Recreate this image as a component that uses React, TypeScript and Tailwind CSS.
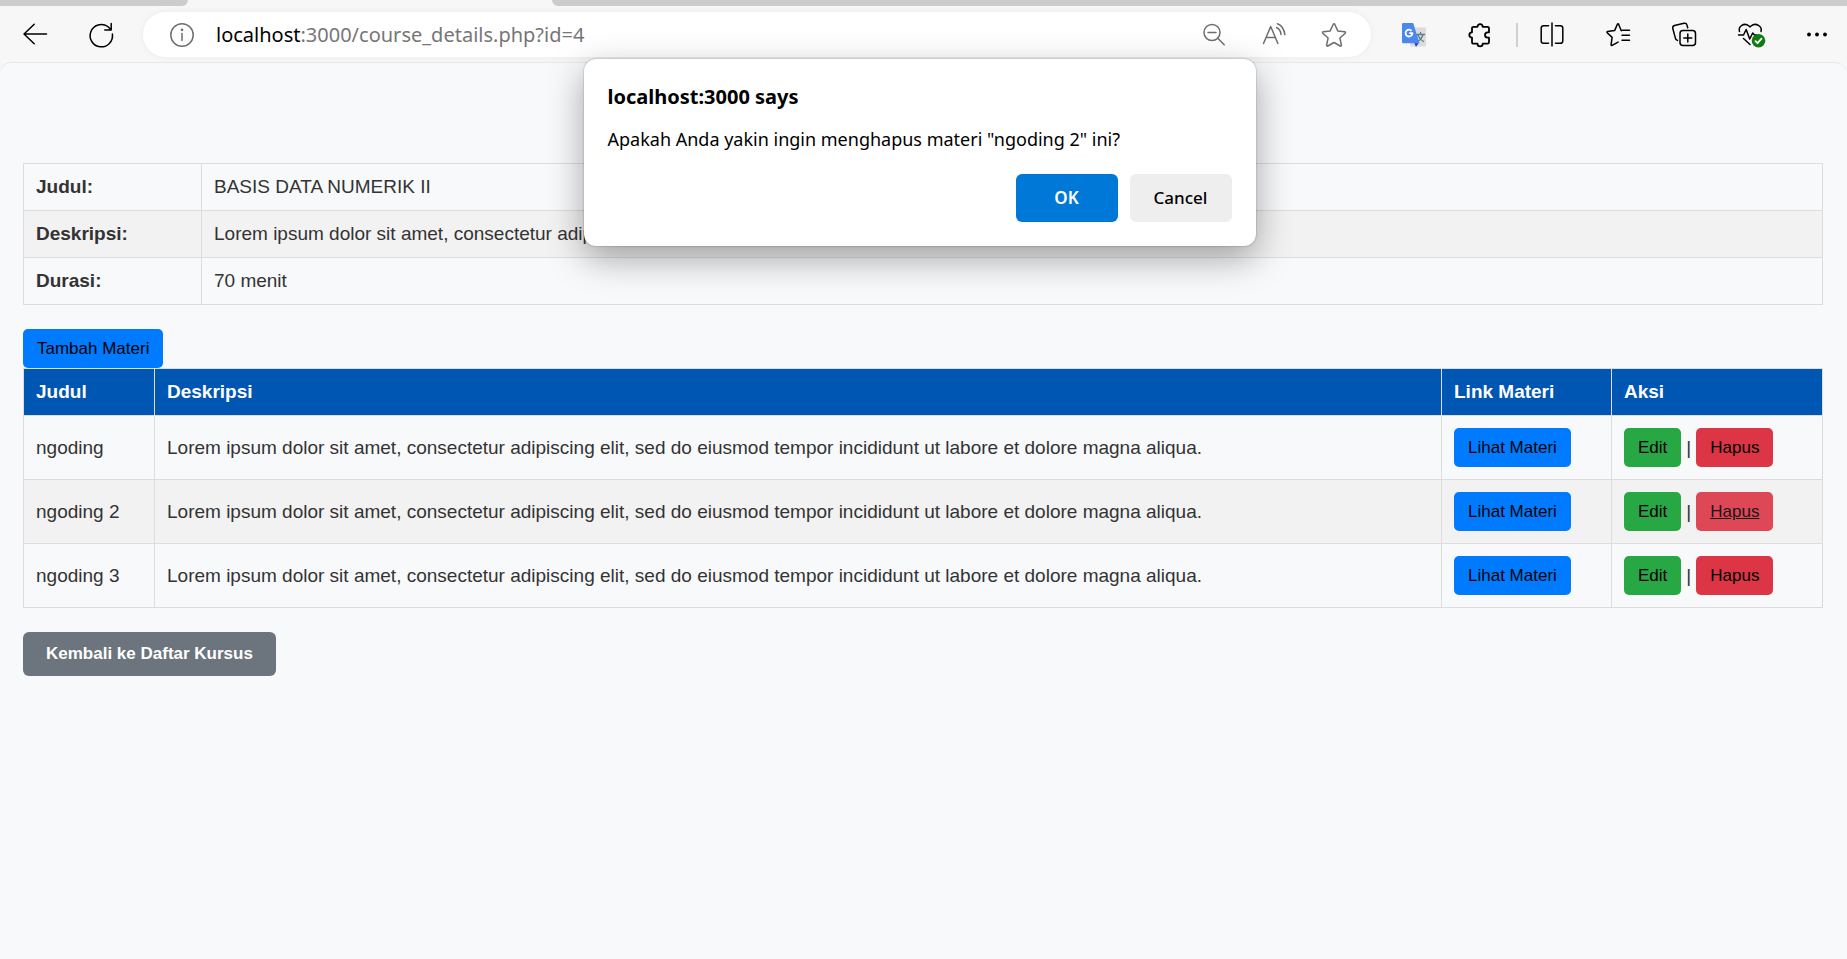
import type { ReactNode } from 'react';

const lorem =
  'Lorem ipsum dolor sit amet, consectetur adipiscing elit, sed do eiusmod tempor incididunt ut labore et dolore magna aliqua.';

const details = [
  { label: 'Judul:', value: 'BASIS DATA NUMERIK II' },
  { label: 'Deskripsi:', value: lorem },
  { label: 'Durasi:', value: '70 menit' },
];

const materials = [
  { title: 'ngoding', active: false },
  { title: 'ngoding 2', active: true },
  { title: 'ngoding 3', active: false },
];

function Icon({ children }: { children: ReactNode }) {
  return (
    <svg
      viewBox="0 0 24 24"
      fill="none"
      stroke="currentColor"
      strokeWidth="1.5"
      strokeLinecap="round"
      strokeLinejoin="round"
      aria-hidden="true"
      className="size-6 overflow-visible"
    >
      {children}
    </svg>
  );
}

function ToolButton({ label, children }: { label: string; children: ReactNode }) {
  return (
    <button type="button" aria-label={label} className="size-6 shrink-0">
      {children}
    </button>
  );
}

function TabStrip() {
  return (
    <div className="flex h-1.5 bg-[#f7f7f7]">
      <div className="w-[188px] rounded-br-md bg-[#cccccc]" />
      <div className="w-[364px]" />
      <div className="flex-1 rounded-bl-md bg-[#cccccc]" />
    </div>
  );
}

function Toolbar() {
  return (
    <div className="flex h-14 items-center bg-[#f7f7f7] pt-px pr-[19px] pl-[23px] text-black">
      <div className="flex gap-[42px]">
        <ToolButton label="Back">
          <Icon>
            <path d="M11.2 1.200 1 11l10.200 9.700M1 11h22.500" />
          </Icon>
        </ToolButton>
        <ToolButton label="Refresh">
          <Icon>
            <path d="M23.400 11a11.200 11.200 0 1 1-4.600-7.500l3 3M22.200.5v6.500h-6.400" />
          </Icon>
        </ToolButton>
      </div>

      <div className="ml-[30px] flex h-[45px] flex-1 items-center rounded-full bg-white pr-[25px] pl-[27px] text-[#6e6e6e] shadow-[0_0_6px_rgba(0,0,0,0.06)]">
        <ToolButton label="View site information">
          <Icon>
            <circle cx="12" cy="12" r="11.2" />
            <path d="M12 10.5v7" />
            <circle cx="12" cy="6.8" r="0.6" fill="currentColor" />
          </Icon>
        </ToolButton>
        <span className="ml-[22px] flex-1 font-['Noto_Sans',sans-serif] text-[20px] leading-7 text-[#767676]">
          <span className="text-black">localhost</span>:3000/course_details.php?id=4
        </span>
        <div className="flex gap-9">
          <ToolButton label="Zoom">
            <Icon>
              <circle cx="10" cy="9.500" r="8" />
              <path d="m15.800 15.300 6.400 6.400M6 9.500h8" />
            </Icon>
          </ToolButton>
          <ToolButton label="Read aloud">
            <Icon>
              <path d="M1.500 20.500 8.700 3.500l7.200 17M4 14.500h9.500M14.500 4.500c2.800 1.300 4.300 3.700 4.500 7M15.500.7c4.200 1.700 6.800 5.500 7.300 11" />
            </Icon>
          </ToolButton>
          <ToolButton label="Add to favorites">
            <Icon>
              <path d="M11.300 1.200a.8.8 0 0 1 1.400 0l3.100 6.700 7 .9a.8.8 0 0 1 .4 1.400l-5.300 4.800 1.500 7.200a.8.8 0 0 1-1.200.8L12 19.500 5.800 23a.8.8 0 0 1-1.200-.8L6.100 15 .8 10.200a.8.8 0 0 1 .4-1.400l7-.9z" />
            </Icon>
          </ToolButton>
        </div>
      </div>

      <div className="ml-[31px] flex items-center">
        <ToolButton label="Google Translate">
          <Icon>
            <rect x="8" y="4.500" width="16" height="19" rx="1" fill="#dcdcdc" stroke="none" />
            <path
              d="M14.500 11.500h8M18.500 9.500v2M21 11.500c-.8 3-2.800 5.500-5.500 7M16 12.500c1 2.500 3 4.700 5.500 6"
              stroke="#607d8b"
              strokeWidth="1.300"
            />
            <path d="M12 19.500h5L14 24z" fill="#3340c0" stroke="none" />
            <path
              d="M1.200 0h10l6.300 20.300H1.200A1.200 1.200 0 0 1 0 19V1.200A1.200 1.200 0 0 1 1.200 0z"
              fill="#4a88f0"
              stroke="none"
            />
            <path d="M9.600 7.900A3.400 3.400 0 1 0 10.400 10.200H7.300" stroke="#fff" strokeWidth="1.800" strokeLinecap="butt" />
          </Icon>
        </ToolButton>
        <div className="ml-[42px] flex">
          <ToolButton label="Extensions">
            <Icon>
              <path
                strokeWidth="1.800"
                d="M6 3.800h3.500a2.600 2.600 0 0 1 5.200 0h4.800a1.500 1.500 0 0 1 1.500 1.500v4h-1.300a2.700 2.700 0 0 0 0 5.400H21v4.500a1.500 1.500 0 0 1-1.500 1.500h-4.800a2.600 2.600 0 0 1-5.200 0H5.500A1.500 1.500 0 0 1 4 19.200v-4.500a2.700 2.700 0 0 1 0-5.400v-4a1.500 1.500 0 0 1 1.500-1.500z"
              />
            </Icon>
          </ToolButton>
        </div>
        <div className="ml-6 h-6 w-0.5 bg-[#d0d0d0]" />
        <div className="ml-[22px] flex gap-[42px]">
          <ToolButton label="Split screen">
            <Icon>
              <path d="M8.500 2.700H3.500A2.300 2.300 0 0 0 1.200 5v13a2.300 2.300 0 0 0 2.300 2.300h5M15.500 2.700h5A2.300 2.300 0 0 1 22.800 5v13a2.300 2.300 0 0 1-2.300 2.300h-5M12 0v23" />
            </Icon>
          </ToolButton>
          <ToolButton label="Favorites">
            <Icon>
              <path d="M15.300 7.700 12.600 1.200a.7.7 0 0 0-1.200 0L8.600 7.600l-7 1a.7.7 0 0 0-.4 1.200l4.900 4.600-1 7.300a.7.7 0 0 0 1 .7l6-3.300M16.500 7.200h7M16 12.200h7.500M16 17.200h7.500" />
            </Icon>
          </ToolButton>
          <ToolButton label="Collections">
            <Icon>
              <rect x="8" y="7.500" width="15.500" height="15" rx="3" />
              <path d="M15.800 11v8M11.800 15h8M5.500 17.500l-1.200-.8a3 3 0 0 1-1-1.800L.8 5.500A2.500 2.500 0 0 1 2.500 2.500L12 .3a2.500 2.500 0 0 1 3 1.800l.7 2.600" />
            </Icon>
          </ToolButton>
          <ToolButton label="Browser essentials">
            <Icon>
              <path d="M1.500 8.500C0 3.500 6-1 11 3l1 1 1-1c5-4 11.500.5 10 5.500M.5 12h5l2.700-5.500 3.500 9.500 3-6 1.800 2h2M5.500 15.500l6.500 6" />
              <circle cx="20.500" cy="17.800" r="6.800" fill="#107c10" stroke="none" />
              <path d="m17.500 18.200 2 2 4-4.500" stroke="#fff" strokeWidth="1.800" />
            </Icon>
          </ToolButton>
          <ToolButton label="Settings and more">
            <Icon>
              <circle cx="5" cy="11.500" r="1.900" fill="currentColor" stroke="none" />
              <circle cx="13" cy="11.500" r="1.900" fill="currentColor" stroke="none" />
              <circle cx="21" cy="11.500" r="1.900" fill="currentColor" stroke="none" />
            </Icon>
          </ToolButton>
        </div>
      </div>
    </div>
  );
}

const pill = 'inline-block rounded-[5px] px-3.5 py-2.5 text-[17px] leading-[19px] text-black';
const cell = 'border border-[#dddddd] px-3 py-3 text-left';

function ConfirmDialog() {
  return (
    <div
      role="dialog"
      aria-labelledby="dialog-title"
      className="absolute top-[59px] left-1/2 flex w-[672px] max-w-full -translate-x-[340px] flex-col rounded-xl bg-white p-6 font-['Noto_Sans',sans-serif] text-black shadow-[0_0_2px_rgba(0,0,0,0.35),0_12px_36px_rgba(0,0,0,0.35)]"
    >
      <h1 id="dialog-title" className="text-[20px] leading-7 font-bold">
        localhost:3000 says
      </h1>
      <p className="mt-3.5 text-[18px] leading-7">Apakah Anda yakin ingin menghapus materi "ngoding 2" ini?</p>
      <div className="mt-[21px] flex justify-end gap-3 text-[17px] font-medium">
        <button type="button" className="h-12 w-[102px] rounded-md bg-[#0078d7] font-semibold text-white">
          OK
        </button>
        <button type="button" className="h-12 w-[102px] rounded-md bg-[#eeeeee]">
          Cancel
        </button>
      </div>
    </div>
  );
}

export default function App() {
  return (
    <div className="relative flex min-h-screen flex-col bg-[#f7f7f7]">
      <TabStrip />
      <Toolbar />
      <main className="flex-1 rounded-t-xl border-t border-[#e6e6e6] bg-[#f8f9fb] pt-[100px] pr-6 pl-[23px] font-['Liberation_Sans',Arial,sans-serif] text-[19px] leading-[22px] text-[#333333]">
        <table className="w-full border-collapse">
          <tbody>
            {details.map((row) => (
              <tr key={row.label} className="even:bg-[#f2f2f2]">
                <th scope="row" className={`${cell} w-[178px] font-bold`}>
                  {row.label}
                </th>
                <td className={cell}>{row.value}</td>
              </tr>
            ))}
          </tbody>
        </table>

        <div className="mt-6 flex">
          <a href="#tambah" className={`${pill} bg-[#007bff]`}>
            Tambah Materi
          </a>
        </div>

        <table className="w-full border-collapse">
          <thead>
            <tr className="bg-[#0056b3] text-white">
              <th scope="col" className={`${cell} w-[131px]`}>Judul</th>
              <th scope="col" className={cell}>Deskripsi</th>
              <th scope="col" className={`${cell} w-[170px]`}>Link Materi</th>
              <th scope="col" className={`${cell} w-[211px]`}>Aksi</th>
            </tr>
          </thead>
          <tbody>
            {materials.map((item) => (
              <tr key={item.title} className="even:bg-[#f2f2f2]">
                <td className={cell}>{item.title}</td>
                <td className={cell}>{lorem}</td>
                <td className={cell}>
                  <div className="flex">
                    <a href="#lihat" className={`${pill} bg-[#007bff]`}>
                      Lihat Materi
                    </a>
                  </div>
                </td>
                <td className={cell}>
                  <div className="flex items-center gap-[5px]">
                    <a href="#edit" className={`${pill} bg-[#28a745]`}>
                      Edit
                    </a>
                    |
                    <a
                      href="#hapus"
                      className={`${pill} bg-[#dc3545] ${item.active ? 'underline opacity-90' : ''}`}
                    >
                      Hapus
                    </a>
                  </div>
                </td>
              </tr>
            ))}
          </tbody>
        </table>

        <a
          href="#kursus"
          className="mt-6 inline-block rounded-md bg-[#6c757d] px-[23px] py-3 text-[17px] leading-5 font-bold text-white"
        >
          Kembali ke Daftar Kursus
        </a>
      </main>
      <ConfirmDialog />
    </div>
  );
}
